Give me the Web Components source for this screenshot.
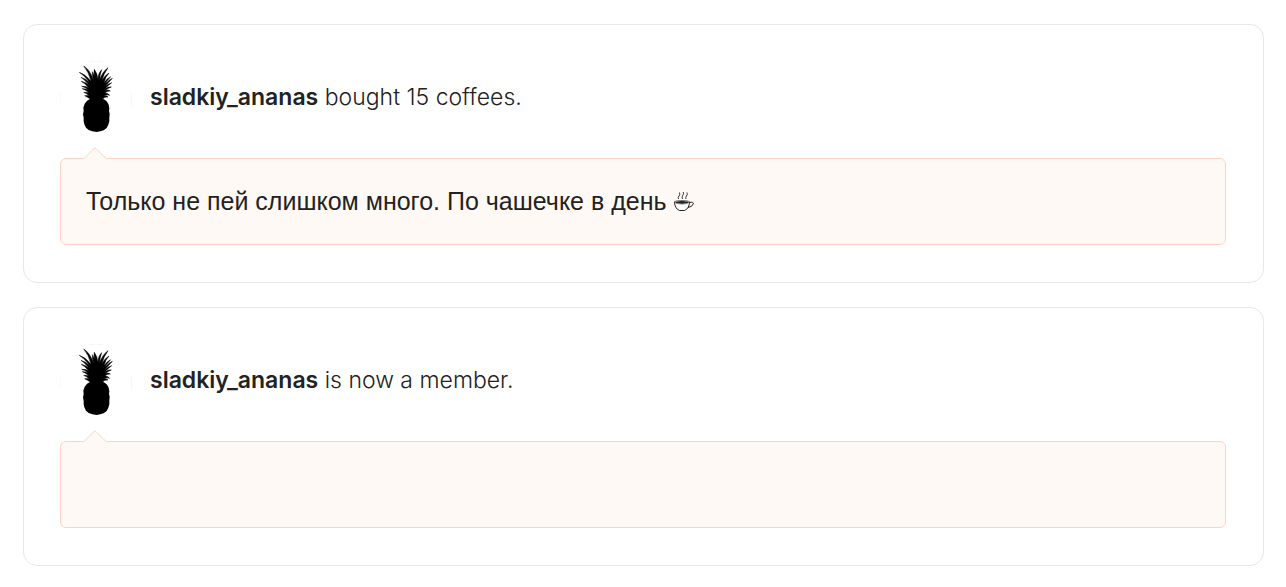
<!DOCTYPE html>
<html lang="ru">
<head>
<meta charset="utf-8">
<meta name="viewport" content="width=device-width, initial-scale=1">
<title>Supporters</title>
<style>
  body { margin: 0; background: #fff; color: #222; font-family: "Inter", "Liberation Sans", sans-serif; }
</style>
</head>
<body>
<supporter-feed>
  <supporter-card name="sladkiy_ananas" action="bought 15 coffees.">Только не пей слишком много. По чашечке в день <coffee-cup></coffee-cup></supporter-card>
  <supporter-card name="sladkiy_ananas" action="is now a member."></supporter-card>
</supporter-feed>

<template id="feed-template">
  <style>
    :host { display: flex; flex-direction: column; gap: 24px; padding: 24px 22px 22px 23px; }
  </style>
  <slot></slot>
</template>

<template id="cup-template">
  <style>
    :host { display: inline-block; width: 22px; height: 22px; vertical-align: -3px; }
    svg { display: block; width: 100%; height: 100%; }
  </style>
  <svg viewBox="0 0 22 22" role="img" aria-label="☕" fill="none" stroke="#222">
    <path d="M1.500 11C1.500 15 3.500 18.500 6.500 19.500H11.500C14.500 18.500 16.500 15 16.500 11Z" fill="#fff"/>
    <path d="M1.500 11Q2 9.500 9 9.500T16.500 11Q15 13 9 13T1.500 11Z" fill="#fff" stroke-width=".6"/>
    <path d="M3 11.200Q9 9.800 15 11.200Q9 13.200 3 11.200Z" fill="#222"/>
    <path d="M16.500 11.500Q20.500 10.500 20.300 12.800Q19.500 16 14.800 16.500"/>
    <path d="M5.500 8Q4.700 6.500 6 5T6.500 1.500M9.500 8Q8.500 6 9.700 4.500T10.300 1M13 8Q12.200 6.500 13.500 5T14 1.500" stroke-width=".9"/>
  </svg>
</template>

<template id="avatar-template">
  <style>
    :host { display: block; flex: none; width: 72px; height: 72px; }
    svg { display: block; width: 100%; height: 100%; }
  </style>
  <svg viewBox="30 18 216 216" role="img" aria-label="Pineapple">
    <path d="M30 110V153M245 110V153M118 20Q138 16 158 20" fill="none" stroke="#f6f6f6" stroke-width="3"/>
    <path d="M122 133Q112 126 104 122Q112 121 118 122Q108 115 101 112Q110 111 117 113Q106 104 97 101Q107 101 116 105Q104 96 95 94Q106 93 116 98Q103 84 94 79Q108 82 117 90Q103 73 93 67Q107 71 119 83Q102 60 88 52Q105 57 123 79Q116 50 101 33Q120 44 131 76Q126 60 127 50Q133 59 136 70Q130 53 133 43Q142 55 144 73Q144 54 155 44Q149 60 149 76Q155 52 174 38Q161 55 155 79Q163 62 177 54Q166 65 162 83Q172 69 182 65Q171 76 165 88Q176 74 187 70Q176 82 165 95Q176 85 185 83Q175 91 165 101Q177 94 184 96Q174 99 165 107Q175 103 181 108Q172 107 164 114Q173 113 179 121Q170 117 162 123Q171 121 174 126Q164 124 157 133Z" stroke="#000" stroke-width="1.500" stroke-linejoin="round"/>
    <path d="M121 131Q138 127 158 131Q171 136 176 149L178 160L177 168L179 176L178 188L178 199L175 209L170 219L161 226L151 229L140 231L127 229L116 225L108 218L103 208L101 199L101 188L99 178L101 168L100 158L104 146Q110 135 121 131Z"/>
  </svg>
</template>

<template id="bubble-template">
  <style>
    :host { display: block; position: relative; box-sizing: border-box; min-height: 87px; padding: 24px 25px; border: 1px solid #ffd3c3; border-radius: 6px; background: #fff9f5; font: 25px/36px "Liberation Sans", sans-serif; }
    .pointer { position: absolute; left: 22px; top: -12px; width: 24px; height: 13px; }
  </style>
  <svg class="pointer" viewBox="0 0 24 13" aria-hidden="true">
    <path d="M0 13V12L11 1Q12 0 13 1L24 12V13Z" fill="#fff9f5"/>
    <path d="M0 12.500L11 1.500Q12 .5 13 1.500L24 12.500" fill="none" stroke="#ffd3c3"/>
  </svg>
  <slot></slot>
</template>

<template id="card-template">
  <style>
    :host { display: flex; flex-direction: column; gap: 25px; padding: 36px 37px 37px 36px; border: 1px solid #e8e8e8; border-radius: 14px; background: #fff; }
    header { display: flex; align-items: center; gap: 18px; }
    p { margin: 0; font-size: 23px; line-height: 32px; font-weight: 300; }
    strong { font-weight: 600; }
  </style>
  <header>
    <pineapple-avatar></pineapple-avatar>
    <p><strong></strong> <span></span></p>
  </header>
  <message-bubble><slot></slot></message-bubble>
</template>

<script>
  class TemplateElement extends HTMLElement {
    constructor() {
      super();
      const template = document.getElementById(this.constructor.template);
      this.attachShadow({ mode: "open" }).append(template.content.cloneNode(true));
    }
  }
  class SupporterFeed extends TemplateElement { static template = "feed-template"; }
  class CoffeeCup extends TemplateElement { static template = "cup-template"; }
  class PineappleAvatar extends TemplateElement { static template = "avatar-template"; }
  class MessageBubble extends TemplateElement { static template = "bubble-template"; }
  class SupporterCard extends TemplateElement {
    static template = "card-template";
    connectedCallback() {
      this.shadowRoot.querySelector("strong").textContent = this.getAttribute("name");
      this.shadowRoot.querySelector("span").textContent = this.getAttribute("action");
    }
  }
  customElements.define("supporter-feed", SupporterFeed);
  customElements.define("coffee-cup", CoffeeCup);
  customElements.define("pineapple-avatar", PineappleAvatar);
  customElements.define("message-bubble", MessageBubble);
  customElements.define("supporter-card", SupporterCard);
</script>
</body>
</html>
